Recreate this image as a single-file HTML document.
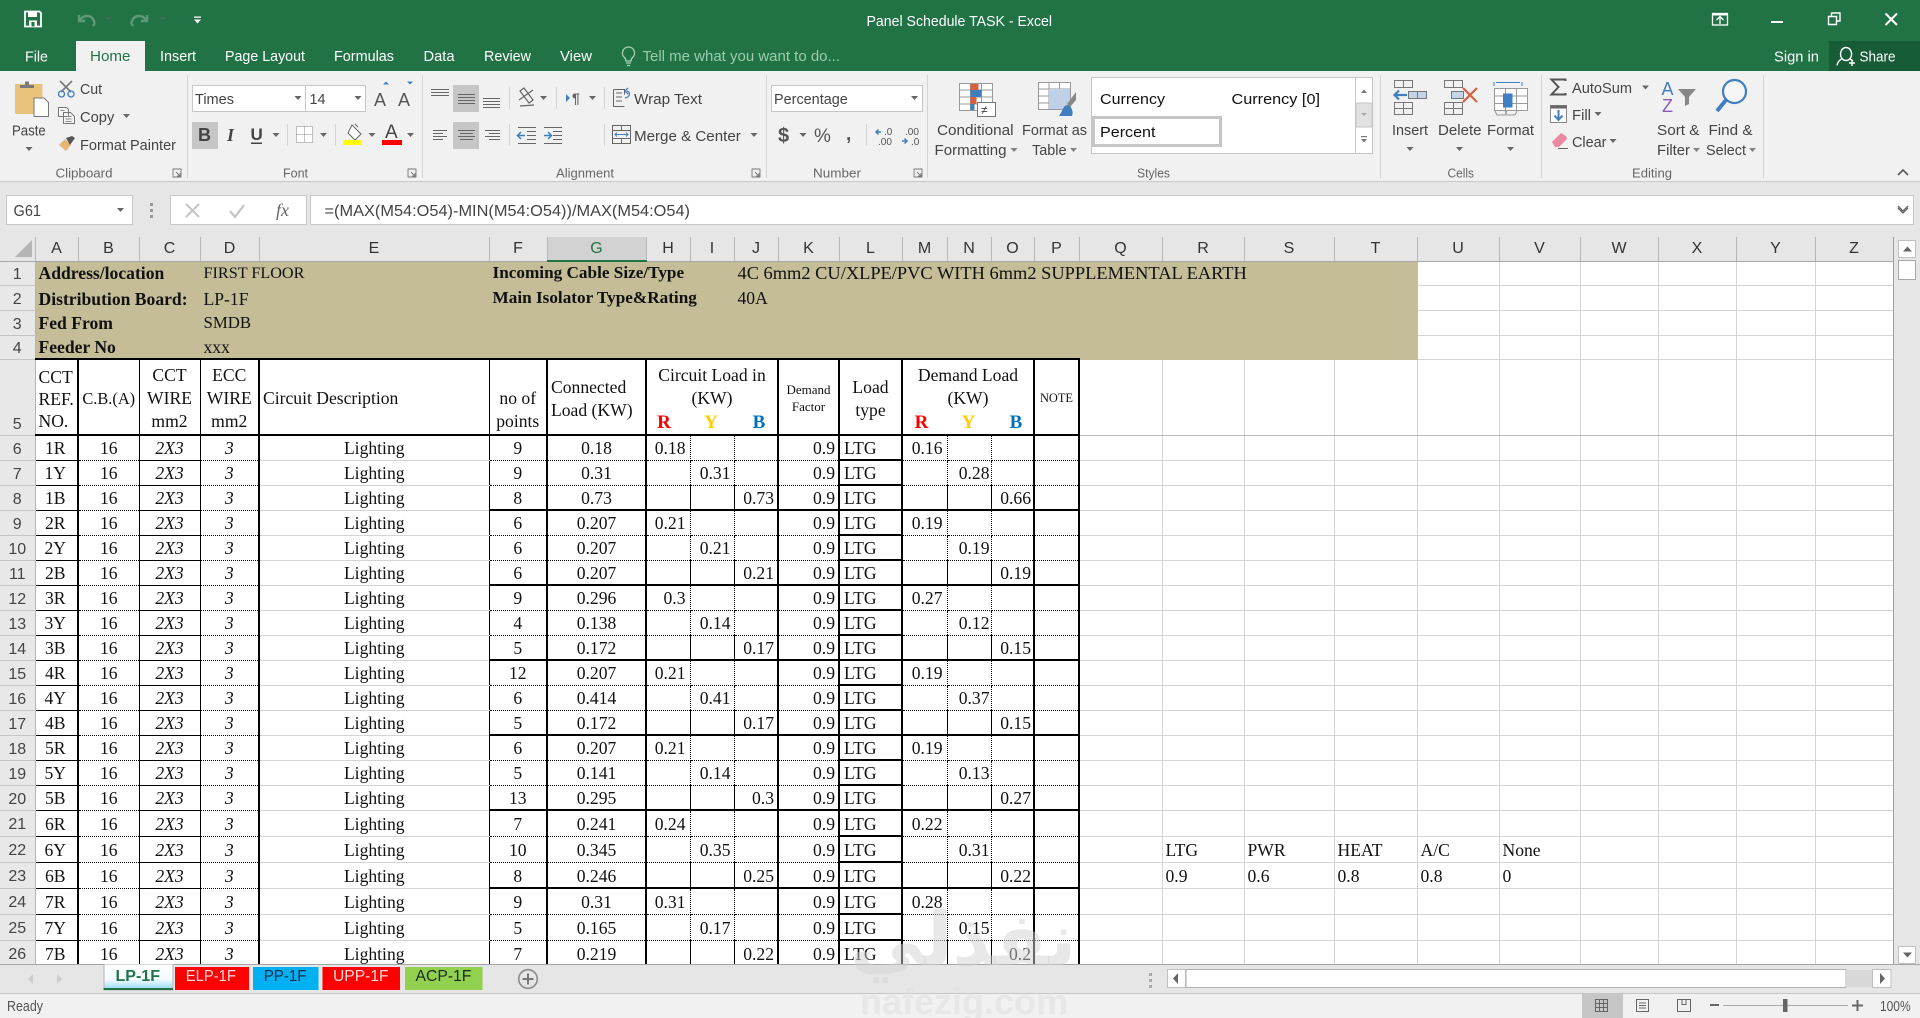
<!DOCTYPE html>
<html><head><meta charset="utf-8"><title>Panel Schedule TASK - Excel</title>
<style>
html,body{margin:0;padding:0;width:1920px;height:1018px;overflow:hidden;background:#f1f1f1}
svg.base{position:absolute;left:0;top:0}
svg text{font-family:"Liberation Sans",sans-serif;font-size:15px;fill:#444}
.w text{fill:#fff}
.g text{font-size:13px;fill:#666}
#sheet{position:absolute;left:0;top:237px;width:1893px;height:727px;overflow:hidden;background:#fff}
table{border-collapse:collapse;table-layout:fixed;width:1893px;font-family:"Liberation Serif","Times New Roman",serif;font-size:17.6px;color:#111}
tr{height:25px}
tr.b26{height:26px}
td{padding:0 3px;border-right:1px solid #d4d4d4;border-bottom:1px solid #d4d4d4;white-space:nowrap;line-height:20px;overflow:visible}
th{padding:4px 0 0;background:#e8e8e8;font:400 16px "Liberation Sans",sans-serif;line-height:18px;color:#444;border-right:1px solid #b4b4b4;border-bottom:1px solid #c4c4c4;text-align:center}
tr.h th{padding:0;background:#e6e6e6;border-right:1px solid #b8b8b8;border-bottom:1px solid #a8a8a8;color:#333}
tr.h th.s{background:#d2d2d2;color:#217346;border-bottom:2px solid #217346}
tr.t td:nth-child(-n+21){background:#c4bd97;border-color:#c4bd97}
tr.t td:nth-child(2),tr.t td:nth-child(7){font-weight:700}
tr.t td:nth-child(7){font-size:17.2px}
tr.r4 td:nth-child(-n+17){border-bottom:2px solid #000}
tr.r5 td:nth-child(-n+13){border-bottom:2px solid #000;white-space:nowrap}
tr.r5 td:nth-child(n+14){border-bottom:1px solid #b8b8b8}
tr.r5 td{line-height:23px}
tr.r5 td.c{text-align:center}
tr.r5 td.p{padding:0}
tr.d td{padding-top:1px}
tr.b26 td{padding-top:2px}
tr.d td:nth-child(-n+17){text-align:center;border-bottom:1px dotted #000}
tr.d td:nth-child(2){border-bottom:1px solid #000;border-right:2px solid #000;padding-right:5px;padding-left:3px}
tr.d td:nth-child(3){border-right:1px solid #000}
tr.d td:nth-child(4){border-right:1px solid #000;border-bottom:1px solid #000;font-style:italic}
tr.d td:nth-child(5){border-right:2px solid #000;font-style:italic}
tr.d td:nth-child(6){border-right:1px solid #000;border-bottom:1px solid #d4d4d4}
tr.d td:nth-child(7){border-right:2px solid #000}
tr.d td:nth-child(8){border-right:2px solid #000}
tr.d td:nth-child(9),tr.d td:nth-child(10),tr.d td:nth-child(14){border-right:1px dotted #000;text-align:right;padding-right:3px}
tr.d td:nth-child(15){border-right:1px dotted #000;text-align:right;padding-right:1px}
tr.d td:nth-child(9){padding-right:4px}
tr.d td:nth-child(14){padding-right:4px}
tr.d td:nth-child(11),tr.d td:nth-child(12){border-right:2px solid #000;text-align:right;padding-right:3px}
tr.d td:nth-child(16){border-right:2px solid #000;text-align:right;padding-right:2px}
tr.d td:nth-child(13){border-right:2px solid #000;border-bottom:2px solid #000;text-align:left;padding-left:4px}
tr.d td:nth-child(17){border-right:2px solid #000}
tr.e td:nth-child(n+7):nth-child(-n+17){border-bottom:2px solid #000}
tr.e td:nth-child(9),tr.e td:nth-child(10),tr.e td:nth-child(14),tr.e td:nth-child(15){border-right:1px solid #000}
.bc{position:absolute;font:700 19px "Liberation Serif",serif;line-height:22px;transform:translateX(-50%)}
#wm{position:absolute;left:0;top:0;width:1920px;height:1018px;pointer-events:none;overflow:hidden}
#wm div{position:absolute;white-space:nowrap}
</style></head><body>
<svg class="base" width="1920" height="1018" viewBox="0 0 1920 1018">
<defs><path id="a" d="M0 0h7l-3.500 4z" fill="#666"/><path id="dl" d="M0 0h8v8h-8zM3 3l4 4M7 4v3h-3" fill="none" stroke="#777" stroke-width=".9"/></defs>
<rect width="1920" height="71" fill="#217346"/>
<rect x="1829" y="41" width="91" height="30" fill="#185c37"/>
<rect x="76" y="41" width="69" height="30" fill="#f1f1f1"/>
<rect y="71" width="1920" height="110" fill="#f1f1f1"/>
<rect y="181" width="1920" height="1" fill="#c8c8c8"/>
<rect y="182" width="1920" height="55" fill="#e6e6e6"/>

<!-- title bar icons -->
<path d="M25 11.500h14.500l1.500 1.500v13.500h-16z" fill="none" stroke="#fff" stroke-width="1.800"/><rect x="28" y="12" width="9" height="5" fill="#fff"/><rect x="29" y="20.500" width="8" height="6" fill="#fff"/><rect x="31.500" y="22" width="3" height="4.500" fill="#217346"/>
<path d="M79 15v6h6M80 20c4-6 12-5 14 1 1 2 0 4-1 5" fill="none" stroke="#5d9a78" stroke-width="2.400"/>
<use href="#a" x="105" y="17" opacity=".4"/>
<path d="M147 15v6h-6M146 20c-4-6-12-5-14 1-1 2 0 4 1 5" fill="none" stroke="#5d9a78" stroke-width="2.400"/>
<use href="#a" x="159.500" y="17" opacity=".4"/>
<rect x="194" y="16.500" width="7" height="1.300" fill="#fff"/><path d="M194 19.500h7l-3.500 4z" fill="#fff"/>
<g class="w"><text x="866.500" y="26" textLength="185.500" lengthAdjust="spacingAndGlyphs">Panel Schedule TASK - Excel</text>
<text x="25" y="61.500" textLength="23" lengthAdjust="spacingAndGlyphs">File</text>
<text x="160" y="61" textLength="36" lengthAdjust="spacingAndGlyphs">Insert</text>
<text x="225" y="61" textLength="80" lengthAdjust="spacingAndGlyphs">Page Layout</text>
<text x="334" y="61" textLength="60" lengthAdjust="spacingAndGlyphs">Formulas</text>
<text x="423.500" y="61" textLength="31" lengthAdjust="spacingAndGlyphs">Data</text>
<text x="484" y="61" textLength="47" lengthAdjust="spacingAndGlyphs">Review</text>
<text x="560" y="61" textLength="32" lengthAdjust="spacingAndGlyphs">View</text>
<text x="1774" y="61.500" textLength="45" lengthAdjust="spacingAndGlyphs">Sign in</text>
<text x="1859.500" y="61.500" textLength="36" lengthAdjust="spacingAndGlyphs">Share</text></g>
<text x="90" y="61" textLength="40.500" lengthAdjust="spacingAndGlyphs" style="fill:#217346">Home</text>
<text x="642.500" y="61" textLength="197.500" lengthAdjust="spacingAndGlyphs" style="fill:#9ccbb0">Tell me what you want to do...</text>
<path d="M628.500 47a6 6 0 0 0-4 10.500c1 1 1.500 2 1.500 3.500h5c0-1.500.5-2.500 1.500-3.500a6 6 0 0 0-4-10.500zM626 63h5M627 65.500h3" fill="none" stroke="#a7d3b9" stroke-width="1.300"/>
<!-- window buttons -->
<rect x="1712.500" y="13.500" width="15" height="11.500" fill="none" stroke="#fff" stroke-width="1.300"/><rect x="1712.500" y="13.500" width="15" height="2" fill="#fff"/><path d="M1720 24v-7M1716.500 20l3.500-3.500 3.500 3.500" fill="none" stroke="#fff" stroke-width="1.300"/>
<rect x="1771" y="21" width="12" height="2" fill="#fff"/>
<path d="M1828.500 16.500h8v8h-8zM1831.500 16v-3h8.500v8h-3.500" fill="none" stroke="#fff" stroke-width="1.400"/>
<path d="M1885.500 13.500l11.500 11.500M1897 13.500l-11.500 11.500" stroke="#fff" stroke-width="2" fill="none"/>
<path d="M1846 47.500a5.500 6.500 0 1 0 .1 0zM1842.500 58.500c-3 1-5 4-5.500 7M1850 59c1 .5 2 1 3 2M1852 60v6M1849 63h6" fill="none" stroke="#fff" stroke-width="1.400"/>

<!-- group separators -->
<g fill="#d4d4d4"><rect x="187" y="75" width="1" height="103"/><rect x="422" y="75" width="1" height="103"/><rect x="766" y="75" width="1" height="103"/><rect x="927" y="75" width="1" height="103"/><rect x="1380" y="75" width="1" height="103"/><rect x="1541" y="75" width="1" height="103"/><rect x="1763" y="75" width="1" height="103"/>
<rect x="287" y="124" width="1" height="22"/><rect x="335" y="124" width="1" height="22"/><rect x="509" y="87" width="1" height="22"/><rect x="509" y="124" width="1" height="22"/><rect x="556" y="87" width="1" height="22"/><rect x="604" y="87" width="1" height="22"/><rect x="604" y="124" width="1" height="22"/><rect x="866" y="124" width="1" height="22"/></g>

<!-- clipboard -->
<rect x="15" y="84" width="27.500" height="30" rx="1" fill="#e9c27c"/><path d="M20 88v-3h5v-3.500h4v3.500h5v3z" fill="#7a7a7a"/>
<path d="M34 98h10l4.500 4.500v14h-14.500z" fill="#fff" stroke="#777"/>
<text x="12" y="135.500" textLength="33.700" lengthAdjust="spacingAndGlyphs">Paste</text><use href="#a" x="25.500" y="147"/>
<path d="M60 81l11 11M72 81l-11 11" stroke="#777" stroke-width="1.600" fill="none"/><circle cx="61.500" cy="94" r="3" fill="none" stroke="#3f7fbf" stroke-width="1.300"/><circle cx="71" cy="94" r="3" fill="none" stroke="#3f7fbf" stroke-width="1.300"/>
<text x="80" y="94" textLength="22" lengthAdjust="spacingAndGlyphs">Cut</text>
<path d="M58.500 107.500h8l2 2v7h-10zM63.500 112.500h7l4 4v7h-11z" fill="#f5f5f5" stroke="#777"/><path d="M65.500 116.500h6M65.500 119h6M65.500 121.500h6M60.500 110.500h4" stroke="#888"/>
<text x="80" y="122" textLength="34.300" lengthAdjust="spacingAndGlyphs">Copy</text><use href="#a" x="123" y="114"/>
<path d="M59 145l6-6 6 6-5 6z" fill="#e3b674"/><path d="M66 138l6-2 3 2-5 7z" fill="#555"/>
<text x="80" y="150" textLength="96" lengthAdjust="spacingAndGlyphs">Format Painter</text>
<!-- font -->
<rect x="192.500" y="85.500" width="113" height="26" fill="#fff" stroke="#c6c6c6"/><rect x="305.500" y="85.500" width="60" height="26" fill="#fff" stroke="#c6c6c6"/>
<text x="195" y="104" textLength="39" lengthAdjust="spacingAndGlyphs">Times</text><text x="309.500" y="104" textLength="16" lengthAdjust="spacingAndGlyphs">14</text>
<use href="#a" x="294.500" y="96"/><use href="#a" x="354.500" y="96"/>
<text x="374" y="106" style="font-size:18px;fill:#555">A</text><path d="M383 84.500h6l-3-3z" fill="#3f7fbf"/>
<text x="398" y="106" style="font-size:18px;fill:#555">A</text><path d="M407 81.500h6l-3 3z" fill="#3f7fbf"/>
<rect x="192" y="122" width="26" height="27" fill="#c6c6c6"/>
<text x="198" y="141" style="font-size:18px;font-weight:700;fill:#444">B</text>
<text x="227" y="141" style="font-size:18px;font-style:italic;font-family:'Liberation Serif';fill:#444;font-weight:700">I</text>
<text x="250.500" y="140" style="font-size:17px;font-weight:700;fill:#444">U</text><rect x="251" y="142.500" width="11" height="1.500" fill="#444"/>
<use href="#a" x="272.500" y="133"/>
<path d="M296.500 126.500h16v16h-16zM304.500 126.500v16M296.500 134.500h16" fill="#fff" stroke="#888" stroke-dasharray="1 1"/>
<use href="#a" x="320" y="133"/>
<path d="M352 125l9 9-6 6-7-7z" fill="#fff" stroke="#666"/><path d="M355 124l3 3" stroke="#666"/><rect x="343" y="140" width="19" height="5" fill="#ff0"/>
<use href="#a" x="368.500" y="133"/>
<text x="385" y="138" style="font-size:19px;fill:#444">A</text><rect x="382" y="140" width="20" height="5" fill="#f00"/>
<use href="#a" x="407" y="133"/>
<text x="283" y="177.500" textLength="25" lengthAdjust="spacingAndGlyphs" style="font-size:13px;fill:#666">Font</text>
<text x="55.500" y="177.500" textLength="57" lengthAdjust="spacingAndGlyphs" style="font-size:13px;fill:#666">Clipboard</text>
<use href="#dl" x="173" y="169"/><use href="#dl" x="408" y="169"/>
<!-- alignment -->
<rect x="453" y="85" width="26" height="27" fill="#c6c6c6"/><rect x="453" y="122" width="26" height="27" fill="#c6c6c6"/>
<path d="M431 89.500h18M431 92.500h18M431 95.500h18M458 94.500h17M458 97.500h17M458 100.500h17M458 103.500h17M483 98.500h17M483 101.500h17M483 104.500h17M483 107.500h17" stroke="#666" fill="none"/>
<path d="M433 130.500h14M433 133.500h10M433 136.500h14M433 139.500h10M458 130.500h17M460 133.500h13M458 136.500h17M460 139.500h13M485 130.500h15M489 133.500h11M485 136.500h15M489 139.500h11" stroke="#666" fill="none"/>
<path d="M519 100l14-10M524 88l9 12-4 3-9-12zM520 106l14-1" fill="none" stroke="#666" stroke-width="1.200"/><use href="#a" x="540" y="96"/>
<path d="M566 94l4 4-4 4z" fill="#3f7fbf"/><text x="572" y="103" style="font-size:14px;font-weight:700;fill:#666">¶</text><use href="#a" x="589" y="96"/>
<path d="M518 127.500h18M518 143.500h18M527 131.500h9M527 135.500h9M527 139.500h9M544 127.500h18M544 143.500h18M553 131.500h9M553 135.500h9M553 139.500h9" stroke="#666" fill="none"/>
<path d="M518 135.500h7M521 132l-3.500 3.500 3.500 3.500M544 135.500h7M548 132l3.500 3.500-3.500 3.500" stroke="#3f7fbf" stroke-width="1.500" fill="none"/>
<path d="M613.500 89.500h11v5M613.500 89.500v17h11M616 93h6M616 97h6M616 101h6" fill="none" stroke="#666"/><path d="M625 98c5-1 6-6 2-7M628 88l-3 3 3 3" fill="none" stroke="#3f7fbf" stroke-width="1.300"/>
<text x="634" y="104" textLength="68" lengthAdjust="spacingAndGlyphs">Wrap Text</text>
<path d="M612.500 125.500h18v18h-18zM612.500 130.500h18M612.500 138.500h18M621.500 125.500v5M621.500 138.500v5" fill="none" stroke="#666"/><path d="M615 134.500h13M617 132.500l-2 2 2 2M626 132.500l2 2-2 2" fill="none" stroke="#3f7fbf"/>
<text x="634" y="141" textLength="106.800" lengthAdjust="spacingAndGlyphs">Merge &amp; Center</text><use href="#a" x="750.500" y="133"/>
<text x="556" y="177.500" textLength="58" lengthAdjust="spacingAndGlyphs" style="font-size:13px;fill:#666">Alignment</text><use href="#dl" x="752" y="169"/>
<!-- number -->
<rect x="771.500" y="85.500" width="151" height="26" fill="#fff" stroke="#c6c6c6"/>
<text x="774" y="104" textLength="73.800" lengthAdjust="spacingAndGlyphs">Percentage</text><use href="#a" x="911" y="96"/>
<text x="778" y="142" style="font-size:20px;font-weight:700;fill:#555">$</text><use href="#a" x="799.500" y="133"/>
<text x="814" y="142" style="font-size:19px;fill:#555">%</text><text x="846" y="140" style="font-size:19px;font-weight:700;fill:#555">,</text>
<text x="884" y="135" style="font-size:10px;fill:#555">.0</text><text x="878" y="145" style="font-size:10px;fill:#555">.00</text><path d="M881 132h-5M878.500 129.500l-2.500 2.500 2.500 2.500" stroke="#3f7fbf" stroke-width="1.500" fill="none"/>
<text x="905" y="135" style="font-size:10px;fill:#555">.00</text><text x="911" y="145" style="font-size:10px;fill:#555">.0</text><path d="M902 141h5M904.500 138.500l2.500 2.500-2.500 2.500" stroke="#3f7fbf" stroke-width="1.500" fill="none"/>
<text x="813" y="177.500" textLength="48" lengthAdjust="spacingAndGlyphs" style="font-size:13px;fill:#666">Number</text><use href="#dl" x="914" y="169"/>
<!-- conditional / table -->
<path d="M959.500 83.500h33v27h-33zM959.500 90h33M959.500 97h33M959.500 104h33M970.500 83.500v27M981.500 83.500v27" fill="#fff" stroke="#999"/>
<rect x="970.500" y="84" width="8" height="6" fill="#d8603f"/><rect x="970.500" y="90" width="11" height="7" fill="#3f7fbf"/><rect x="970.500" y="97" width="6" height="7" fill="#d8603f"/><rect x="970.500" y="104" width="4" height="6" fill="#3f7fbf"/>
<rect x="977.500" y="102.500" width="18" height="14" fill="#fff" stroke="#777"/><text x="981" y="114" style="font-size:12px;fill:#444">≠</text>
<text x="937" y="135" textLength="76.500" lengthAdjust="spacingAndGlyphs">Conditional</text><text x="934.500" y="155" textLength="72" lengthAdjust="spacingAndGlyphs">Formatting</text><use href="#a" x="1010.500" y="148" opacity=".8"/>
<path d="M1038.500 82.500h32v27h-32zM1038.500 89h32M1038.500 96h32M1038.500 103h32M1049 82.500v27M1059.500 82.500v27" fill="#fff" stroke="#999"/><rect x="1049" y="89" width="21" height="20" fill="#c0d0e8"/>
<path d="M1076 92l-9 12 3 3 6-7z" fill="#888"/><path d="M1067 105c-4 1-4 5-8 11h13c2-5-1-10-5-11z" fill="#3f7fbf"/>
<text x="1022" y="135" textLength="65" lengthAdjust="spacingAndGlyphs">Format as</text><text x="1032" y="155" textLength="34.500" lengthAdjust="spacingAndGlyphs">Table</text><use href="#a" x="1070" y="148" opacity=".8"/>
<!-- styles gallery -->
<rect x="1091.500" y="77.500" width="281" height="76" fill="#fff" stroke="#c6c6c6"/>
<rect x="1093.500" y="117.500" width="127" height="28" fill="#fff" stroke="#c6c6c6" stroke-width="3"/>
<g style="fill:#111"><text x="1100" y="104" textLength="65" lengthAdjust="spacingAndGlyphs" style="fill:#111">Currency</text><text x="1231.500" y="104" textLength="88.500" lengthAdjust="spacingAndGlyphs" style="fill:#111">Currency [0]</text><text x="1100" y="137" textLength="55.500" lengthAdjust="spacingAndGlyphs" style="fill:#111">Percent</text></g>
<rect x="1355.500" y="77.500" width="17" height="76" fill="#fff" stroke="#c6c6c6"/><rect x="1356" y="103" width="16" height="24" fill="#e2e2e2" stroke="#c6c6c6"/>
<path d="M1361 93l3-3.500 3 3.500z" fill="#777"/><path d="M1361 113h6l-3 3z" fill="#aaa"/><rect x="1361" y="136" width="6" height="1.200" fill="#777"/><path d="M1361 139h6l-3 3.500z" fill="#777"/>
<text x="1137" y="177.500" textLength="33" lengthAdjust="spacingAndGlyphs" style="font-size:13px;fill:#666">Styles</text>
<!-- cells -->
<path d="M1394.500 80.500h18v7h-18zM1403.500 80.500v7M1394.500 102.500h18v12h-18zM1403.500 102.500v12M1394.500 108.500h18" fill="none" stroke="#777"/><rect x="1408.500" y="91.500" width="18" height="7" fill="#c5d4e6" stroke="#777"/><path d="M1417.500 91.500v7" stroke="#777"/><path d="M1407 95h-12M1399 90.500l-4.500 4.500 4.500 4.500" stroke="#3f7fbf" stroke-width="2.200" fill="none"/>
<text x="1392" y="135" textLength="36" lengthAdjust="spacingAndGlyphs">Insert</text><use href="#a" x="1406.500" y="147"/>
<path d="M1444.500 80.500h18v7h-18zM1453.500 80.500v7M1444.500 102.500h18v12h-18zM1453.500 102.500v12M1444.500 108.500h18" fill="none" stroke="#777"/><rect x="1451.500" y="91.500" width="12" height="7" fill="#c5d4e6" stroke="#777"/>
<path d="M1463 88l14 14M1477 88l-14 14" stroke="#d8603f" stroke-width="2.200" fill="none"/>
<text x="1438" y="135" textLength="43.500" lengthAdjust="spacingAndGlyphs">Delete</text><use href="#a" x="1456" y="147"/>
<path d="M1494 82v4M1522 82v4M1496 82.500h24" stroke="#3f7fbf" fill="none"/><path d="M1494.500 88.500h33v22h-33zM1505.500 88.500v22M1516.500 88.500v22M1494.500 96h33M1494.500 103.500h33" fill="#fff" stroke="#999"/><rect x="1503" y="93.500" width="9.500" height="14" fill="#3f7fbf"/>
<path d="M1495 111l2 4h8l2-4M1505 111l2 4h8l2-4" fill="none" stroke="#999"/>
<text x="1487" y="135" textLength="47" lengthAdjust="spacingAndGlyphs">Format</text><use href="#a" x="1507" y="147"/>
<text x="1447.500" y="177.500" textLength="26.500" lengthAdjust="spacingAndGlyphs" style="font-size:13px;fill:#666">Cells</text>
<!-- editing -->
<path d="M1565.500 81v-1.500h-14l7 7.500-7 7.500h14v-1.500" fill="none" stroke="#555" stroke-width="2"/>
<text x="1572" y="93" textLength="60" lengthAdjust="spacingAndGlyphs">AutoSum</text><use href="#a" x="1642" y="85.500"/>
<rect x="1550.500" y="105.500" width="16" height="17" fill="#fff" stroke="#888"/><rect x="1550.500" y="105.500" width="16" height="3" fill="#666"/><path d="M1558.500 110v10M1554.500 115.500l4 4.500 4-4.500" stroke="#3f7fbf" stroke-width="2" fill="none"/>
<text x="1572" y="120" textLength="19" lengthAdjust="spacingAndGlyphs">Fill</text><use href="#a" x="1594.500" y="112"/>
<path d="M1552 142l9-9 5 3 1 3-8 8h-4z" fill="#ea8aa0"/><path d="M1558 148.500h10" stroke="#666"/>
<text x="1572" y="147" textLength="34.500" lengthAdjust="spacingAndGlyphs">Clear</text><use href="#a" x="1609.500" y="139"/>
<text x="1661.500" y="95" style="font-size:18px;fill:#3f7fbf">A</text><text x="1662" y="112" style="font-size:18px;fill:#8a5bb5">Z</text>
<path d="M1678 89h18l-7 8v7l-4 2v-9z" fill="#888"/>
<text x="1657" y="135" textLength="42.500" lengthAdjust="spacingAndGlyphs">Sort &amp;</text><text x="1657" y="155" textLength="33" lengthAdjust="spacingAndGlyphs">Filter</text><use href="#a" x="1693" y="148" opacity=".8"/>
<circle cx="1734.500" cy="91.500" r="11.500" fill="#fff" fill-opacity=".4" stroke="#3f7fbf" stroke-width="2.200"/><path d="M1726 100l-9 11" stroke="#3f7fbf" stroke-width="4"/>
<text x="1708.500" y="135" textLength="44" lengthAdjust="spacingAndGlyphs">Find &amp;</text><text x="1706" y="155" textLength="40" lengthAdjust="spacingAndGlyphs">Select</text><use href="#a" x="1749" y="148" opacity=".8"/>
<text x="1632" y="177.500" textLength="40" lengthAdjust="spacingAndGlyphs" style="font-size:13px;fill:#666">Editing</text>
<path d="M1898 175l5-5 5 5" fill="none" stroke="#555" stroke-width="1.600"/>

<!-- formula bar -->
<rect x="6.500" y="195.500" width="126" height="29" fill="#fff" stroke="#c8c8c8"/>
<text x="13.500" y="216" textLength="27.500" lengthAdjust="spacingAndGlyphs" style="font-size:16px">G61</text><use href="#a" x="117" y="208"/>
<g fill="#999"><rect x="150" y="203" width="3" height="3"/><rect x="150" y="209" width="3" height="3"/><rect x="150" y="215" width="3" height="3"/></g>
<rect x="170.500" y="195.500" width="136" height="29" fill="#fff" stroke="#c8c8c8"/>
<path d="M186 204l13 13M199 204l-13 13" stroke="#c4c4c4" stroke-width="2" fill="none"/><path d="M230 211l5 6 9-12" stroke="#c4c4c4" stroke-width="2.200" fill="none"/>
<text x="276" y="216" style="font-family:'Liberation Serif';font-style:italic;font-size:18px;fill:#666">fx</text>
<rect x="310.500" y="195.500" width="1603" height="29" fill="#fff" stroke="#c8c8c8"/>
<text x="324.500" y="216" textLength="365.500" lengthAdjust="spacingAndGlyphs" style="font-size:15.500px">=(MAX(M54:O54)-MIN(M54:O54))/MAX(M54:O54)</text>
<path d="M1898 206l5 5 5-5M1898 208l5 5 5-5" fill="none" stroke="#666" stroke-width="1.300"/>

<!-- vertical scrollbar -->
<rect x="1893" y="237" width="27" height="727" fill="#e6e6e6"/><rect x="1893" y="237" width="1" height="727" fill="#a0a0a0"/>
<rect x="1898.500" y="240.500" width="17" height="17" fill="#fff" stroke="#c0c0c0"/><path d="M1903 251.500h9l-4.500-5z" fill="#666"/>
<rect x="1898.500" y="260.500" width="17" height="19" fill="#fff" stroke="#a8a8a8"/>
<rect x="1898.500" y="946.500" width="17" height="17" fill="#fff" stroke="#c0c0c0"/><path d="M1903 952.500h9l-4.500 5z" fill="#666"/>

<!-- tabs bar -->
<rect y="964" width="1920" height="30" fill="#e6e6e6"/><rect y="964" width="1920" height="1" fill="#a4a4a4"/><rect y="993" width="1920" height="1" fill="#c6c6c6"/>
<path d="M33 974l-5 5 5 5z" fill="#ccc"/><path d="M57 974l5 5-5 5z" fill="#ccc"/>
<defs><linearGradient id="lp" x1="0" y1="0" x2="0" y2="1"><stop offset="0" stop-color="#fff"/><stop offset=".6" stop-color="#f2fbff"/><stop offset="1" stop-color="#8fd8f5"/></linearGradient></defs>
<rect x="104" y="964" width="69" height="26" fill="url(#lp)" stroke="#b4b4b4"/><rect x="103.500" y="988" width="69.500" height="2" fill="#217346"/>
<rect x="175" y="967" width="74" height="23" fill="#f00"/><rect x="253" y="967" width="65.500" height="23" fill="#00b0f0"/><rect x="322.500" y="967" width="77.500" height="23" fill="#f00"/><rect x="405" y="967" width="77.500" height="23" fill="#92d050"/>
<text x="115.500" y="981" textLength="44.500" lengthAdjust="spacingAndGlyphs" style="font-size:16px;font-weight:700;fill:#217346">LP-1F</text>
<text x="185.700" y="981" textLength="50.300" lengthAdjust="spacingAndGlyphs" style="font-size:16px;fill:#ffd9d9">ELP-1F</text>
<text x="263.700" y="981" textLength="42.800" lengthAdjust="spacingAndGlyphs" style="font-size:16px;fill:#1c2a50">PP-1F</text>
<text x="333" y="981" textLength="55.600" lengthAdjust="spacingAndGlyphs" style="font-size:16px;fill:#ffd9d9">UPP-1F</text>
<text x="415.500" y="981" textLength="55.900" lengthAdjust="spacingAndGlyphs" style="font-size:16px;fill:#1a2a1a">ACP-1F</text>
<circle cx="528" cy="979" r="9.300" fill="none" stroke="#8a8a8a" stroke-width="1.600"/><path d="M522.500 979h11M528 973.500v11" stroke="#777" stroke-width="2"/>
<g fill="#a8a8a8"><rect x="1149" y="973" width="3" height="3"/><rect x="1149" y="979" width="3" height="3"/><rect x="1149" y="985" width="3" height="3"/></g>
<rect x="1167.500" y="969.500" width="18" height="18" fill="#fff" stroke="#c0c0c0"/><path d="M1178 973l-5 5.500 5 5.500z" fill="#666"/>
<rect x="1186" y="969.500" width="660" height="18" fill="#fff" stroke="#b0b0b0"/><rect x="1846" y="970" width="27" height="17" fill="#d8d8d8"/>
<rect x="1872.500" y="969.500" width="18.500" height="18" fill="#fff" stroke="#c0c0c0"/><path d="M1880 973l5 5.500-5 5.500z" fill="#666"/>

<!-- status bar -->
<rect y="994" width="1920" height="24" fill="#f1f1f1"/>
<text x="7" y="1011" textLength="36" lengthAdjust="spacingAndGlyphs" style="font-size:14.500px;fill:#555">Ready</text>
<rect x="1582" y="994" width="41" height="24" fill="#c6c6c6"/>
<path d="M1595.500 999.500h12v12h-12zM1599.500 999.500v12M1603.500 999.500v12M1595.500 1003.500h12M1595.500 1007.500h12" fill="none" stroke="#666"/>
<path d="M1636.500 999.500h12v12h-12zM1639 1003h7M1639 1005.500h7M1639 1008h7" fill="none" stroke="#666"/>
<path d="M1677.500 999.500h13v12h-13zM1682 999.500v5h4v-5" fill="none" stroke="#666"/>
<rect x="1710" y="1004" width="9" height="2" fill="#666"/><rect x="1723" y="1005" width="125" height="1" fill="#aaa"/><rect x="1783" y="999" width="4.500" height="13" fill="#666"/>
<path d="M1852 1005.500h11M1857.500 1000v11" stroke="#666" stroke-width="2"/>
<text x="1880" y="1011" textLength="30.600" lengthAdjust="spacingAndGlyphs" style="font-size:14.500px;fill:#555">100%</text>
</svg>

<div id="sheet">
<table><colgroup><col style="width:35px"><col style="width:43px"><col style="width:61px"><col style="width:61px"><col style="width:59px"><col style="width:230px"><col style="width:58px"><col style="width:99px"><col style="width:44px"><col style="width:44px"><col style="width:44px"><col style="width:61px"><col style="width:63px"><col style="width:45px"><col style="width:44px"><col style="width:43px"><col style="width:45px"><col style="width:83px"><col style="width:82px"><col style="width:90px"><col style="width:83px"><col style="width:82px"><col style="width:81px"><col style="width:78px"><col style="width:78px"><col style="width:79px"><col style="width:78px"></colgroup>
<tr class="h" style="height:24px"><th style="position:relative"><svg width="34" height="23" style="position:absolute;left:0;top:0"><path d="M32 3v17H15z" fill="#b5b5b5"/></svg></th><th>A</th><th>B</th><th>C</th><th>D</th><th>E</th><th>F</th><th class="s">G</th><th>H</th><th>I</th><th>J</th><th>K</th><th>L</th><th>M</th><th>N</th><th>O</th><th>P</th><th>Q</th><th>R</th><th>S</th><th>T</th><th>U</th><th>V</th><th>W</th><th>X</th><th>Y</th><th>Z</th></tr>
<tr class="t" style="height:24px"><th>1</th><td>Address/location</td><td></td><td></td><td style="font-size:16.200px">FIRST FLOOR</td><td></td><td>Incoming Cable Size/Type</td><td></td><td></td><td></td><td style="font-size:18.400px">4C 6mm2 CU/XLPE/PVC WITH 6mm2 SUPPLEMENTAL EARTH</td><td></td><td></td><td></td><td></td><td></td><td></td><td></td><td></td><td></td><td></td><td></td><td></td><td></td><td></td><td></td><td></td></tr>
<tr class="t"><th>2</th><td style="padding-top:2px">Distribution Board:</td><td></td><td></td><td style="padding-top:2px">LP-1F</td><td></td><td>Main Isolator Type&amp;Rating</td><td></td><td></td><td></td><td>40A</td><td></td><td></td><td></td><td></td><td></td><td></td><td></td><td></td><td></td><td></td><td></td><td></td><td></td><td></td><td></td><td></td></tr>
<tr class="t"><th>3</th><td>Fed From</td><td></td><td></td><td style="font-size:16.800px">SMDB</td><td></td><td></td><td></td><td></td><td></td><td></td><td></td><td></td><td></td><td></td><td></td><td></td><td></td><td></td><td></td><td></td><td></td><td></td><td></td><td></td><td></td><td></td></tr>
<tr class="t r4" style="height:24px"><th>4</th><td>Feeder No</td><td></td><td></td><td>xxx</td><td></td><td></td><td></td><td></td><td></td><td></td><td></td><td></td><td></td><td></td><td></td><td></td><td></td><td></td><td></td><td></td><td></td><td></td><td></td><td></td><td></td><td></td></tr>
<tr class="r5" style="height:76px"><th style="vertical-align:bottom;line-height:20px;padding:0">5</th>
<td style="line-height:22px;border-right:2px solid #000;padding-top:3px">CCT<br>REF.<br>NO.</td>
<td class="c p" style="border-right:1px solid #000;font-size:16.400px;padding-top:2px">C.B.(A)</td>
<td class="c p" style="border-right:1px solid #000;padding-top:2px">CCT<br>WIRE<br>mm2</td>
<td class="c p" style="border-right:2px solid #000;padding-top:2px">ECC<br>WIRE<br>mm2</td>
<td style="border-right:1px solid #000;padding-top:2px">Circuit Description</td>
<td class="c p" style="border-right:2px solid #000;vertical-align:bottom;padding-bottom:1px">no of<br>points</td>
<td style="border-right:2px solid #000;padding-top:4px">Connected<br>Load (KW)</td>
<td colspan="3" class="c p" style="border-right:2px solid #000;vertical-align:top;padding-top:4px">Circuit Load in<br>(KW)</td>
<td class="c p" style="border-right:2px solid #000;font-size:13px;line-height:17px;padding-top:2px">Demand<br>Factor</td>
<td class="c p" style="border-right:2px solid #000;padding-top:4px">Load<br>type</td>
<td colspan="3" class="c p" style="border-right:2px solid #000;vertical-align:top;padding-top:4px">Demand Load<br>(KW)</td>
<td class="c p" style="border-right:2px solid #000;font-size:12.400px;padding-top:2px">NOTE</td>
<td></td><td></td><td></td><td></td><td></td><td></td><td></td><td></td><td></td><td></td></tr>
<tr class="d"><th>6</th><td>1R</td><td>16</td><td>2X3</td><td>3</td><td>Lighting</td><td>9</td><td>0.18</td><td>0.18</td><td></td><td></td><td>0.9</td><td>LTG</td><td>0.16</td><td></td><td></td><td></td><td></td><td></td><td></td><td></td><td></td><td></td><td></td><td></td><td></td><td></td></tr>
<tr class="d"><th>7</th><td>1Y</td><td>16</td><td>2X3</td><td>3</td><td>Lighting</td><td>9</td><td>0.31</td><td></td><td>0.31</td><td></td><td>0.9</td><td>LTG</td><td></td><td>0.28</td><td></td><td></td><td></td><td></td><td></td><td></td><td></td><td></td><td></td><td></td><td></td><td></td></tr>
<tr class="d e"><th>8</th><td>1B</td><td>16</td><td>2X3</td><td>3</td><td>Lighting</td><td>8</td><td>0.73</td><td></td><td></td><td>0.73</td><td>0.9</td><td>LTG</td><td></td><td></td><td>0.66</td><td></td><td></td><td></td><td></td><td></td><td></td><td></td><td></td><td></td><td></td><td></td></tr>
<tr class="d"><th>9</th><td>2R</td><td>16</td><td>2X3</td><td>3</td><td>Lighting</td><td>6</td><td>0.207</td><td>0.21</td><td></td><td></td><td>0.9</td><td>LTG</td><td>0.19</td><td></td><td></td><td></td><td></td><td></td><td></td><td></td><td></td><td></td><td></td><td></td><td></td><td></td></tr>
<tr class="d"><th>10</th><td>2Y</td><td>16</td><td>2X3</td><td>3</td><td>Lighting</td><td>6</td><td>0.207</td><td></td><td>0.21</td><td></td><td>0.9</td><td>LTG</td><td></td><td>0.19</td><td></td><td></td><td></td><td></td><td></td><td></td><td></td><td></td><td></td><td></td><td></td><td></td></tr>
<tr class="d e"><th>11</th><td>2B</td><td>16</td><td>2X3</td><td>3</td><td>Lighting</td><td>6</td><td>0.207</td><td></td><td></td><td>0.21</td><td>0.9</td><td>LTG</td><td></td><td></td><td>0.19</td><td></td><td></td><td></td><td></td><td></td><td></td><td></td><td></td><td></td><td></td><td></td></tr>
<tr class="d"><th>12</th><td>3R</td><td>16</td><td>2X3</td><td>3</td><td>Lighting</td><td>9</td><td>0.296</td><td>0.3</td><td></td><td></td><td>0.9</td><td>LTG</td><td>0.27</td><td></td><td></td><td></td><td></td><td></td><td></td><td></td><td></td><td></td><td></td><td></td><td></td><td></td></tr>
<tr class="d"><th>13</th><td>3Y</td><td>16</td><td>2X3</td><td>3</td><td>Lighting</td><td>4</td><td>0.138</td><td></td><td>0.14</td><td></td><td>0.9</td><td>LTG</td><td></td><td>0.12</td><td></td><td></td><td></td><td></td><td></td><td></td><td></td><td></td><td></td><td></td><td></td><td></td></tr>
<tr class="d e"><th>14</th><td>3B</td><td>16</td><td>2X3</td><td>3</td><td>Lighting</td><td>5</td><td>0.172</td><td></td><td></td><td>0.17</td><td>0.9</td><td>LTG</td><td></td><td></td><td>0.15</td><td></td><td></td><td></td><td></td><td></td><td></td><td></td><td></td><td></td><td></td><td></td></tr>
<tr class="d"><th>15</th><td>4R</td><td>16</td><td>2X3</td><td>3</td><td>Lighting</td><td>12</td><td>0.207</td><td>0.21</td><td></td><td></td><td>0.9</td><td>LTG</td><td>0.19</td><td></td><td></td><td></td><td></td><td></td><td></td><td></td><td></td><td></td><td></td><td></td><td></td><td></td></tr>
<tr class="d"><th>16</th><td>4Y</td><td>16</td><td>2X3</td><td>3</td><td>Lighting</td><td>6</td><td>0.414</td><td></td><td>0.41</td><td></td><td>0.9</td><td>LTG</td><td></td><td>0.37</td><td></td><td></td><td></td><td></td><td></td><td></td><td></td><td></td><td></td><td></td><td></td><td></td></tr>
<tr class="d e"><th>17</th><td>4B</td><td>16</td><td>2X3</td><td>3</td><td>Lighting</td><td>5</td><td>0.172</td><td></td><td></td><td>0.17</td><td>0.9</td><td>LTG</td><td></td><td></td><td>0.15</td><td></td><td></td><td></td><td></td><td></td><td></td><td></td><td></td><td></td><td></td><td></td></tr>
<tr class="d"><th>18</th><td>5R</td><td>16</td><td>2X3</td><td>3</td><td>Lighting</td><td>6</td><td>0.207</td><td>0.21</td><td></td><td></td><td>0.9</td><td>LTG</td><td>0.19</td><td></td><td></td><td></td><td></td><td></td><td></td><td></td><td></td><td></td><td></td><td></td><td></td><td></td></tr>
<tr class="d"><th>19</th><td>5Y</td><td>16</td><td>2X3</td><td>3</td><td>Lighting</td><td>5</td><td>0.141</td><td></td><td>0.14</td><td></td><td>0.9</td><td>LTG</td><td></td><td>0.13</td><td></td><td></td><td></td><td></td><td></td><td></td><td></td><td></td><td></td><td></td><td></td><td></td></tr>
<tr class="d e"><th>20</th><td>5B</td><td>16</td><td>2X3</td><td>3</td><td>Lighting</td><td>13</td><td>0.295</td><td></td><td></td><td>0.3</td><td>0.9</td><td>LTG</td><td></td><td></td><td>0.27</td><td></td><td></td><td></td><td></td><td></td><td></td><td></td><td></td><td></td><td></td><td></td></tr>
<tr class="d b26"><th>21</th><td>6R</td><td>16</td><td>2X3</td><td>3</td><td>Lighting</td><td>7</td><td>0.241</td><td>0.24</td><td></td><td></td><td>0.9</td><td>LTG</td><td>0.22</td><td></td><td></td><td></td><td></td><td></td><td></td><td></td><td></td><td></td><td></td><td></td><td></td><td></td></tr>
<tr class="d b26"><th>22</th><td>6Y</td><td>16</td><td>2X3</td><td>3</td><td>Lighting</td><td>10</td><td>0.345</td><td></td><td>0.35</td><td></td><td>0.9</td><td>LTG</td><td></td><td>0.31</td><td></td><td></td><td></td><td>LTG</td><td>PWR</td><td>HEAT</td><td>A/C</td><td>None</td><td></td><td></td><td></td><td></td></tr>
<tr class="d e b26"><th>23</th><td>6B</td><td>16</td><td>2X3</td><td>3</td><td>Lighting</td><td>8</td><td>0.246</td><td></td><td></td><td>0.25</td><td>0.9</td><td>LTG</td><td></td><td></td><td>0.22</td><td></td><td></td><td>0.9</td><td>0.6</td><td>0.8</td><td>0.8</td><td>0</td><td></td><td></td><td></td><td></td></tr>
<tr class="d b26"><th>24</th><td>7R</td><td>16</td><td>2X3</td><td>3</td><td>Lighting</td><td>9</td><td>0.31</td><td>0.31</td><td></td><td></td><td>0.9</td><td>LTG</td><td>0.28</td><td></td><td></td><td></td><td></td><td></td><td></td><td></td><td></td><td></td><td></td><td></td><td></td><td></td></tr>
<tr class="d b26"><th>25</th><td>7Y</td><td>16</td><td>2X3</td><td>3</td><td>Lighting</td><td>5</td><td>0.165</td><td></td><td>0.17</td><td></td><td>0.9</td><td>LTG</td><td></td><td>0.15</td><td></td><td></td><td></td><td></td><td></td><td></td><td></td><td></td><td></td><td></td><td></td><td></td></tr>
<tr class="d e b26"><th>26</th><td>7B</td><td>16</td><td>2X3</td><td>3</td><td>Lighting</td><td>7</td><td>0.219</td><td></td><td></td><td>0.22</td><td>0.9</td><td>LTG</td><td></td><td></td><td>0.2</td><td></td><td></td><td></td><td></td><td></td><td></td><td></td><td></td><td></td><td></td><td></td></tr>
</table>
<div class="bc" style="left:664px;top:175px;color:#f00">R</div><div class="bc" style="left:711px;top:175px;color:#ffcc00">Y</div><div class="bc" style="left:759px;top:175px;color:#0070c0">B</div>
<div class="bc" style="left:921.500px;top:175px;color:#f00">R</div><div class="bc" style="left:968.500px;top:175px;color:#ffcc00">Y</div><div class="bc" style="left:1016px;top:175px;color:#0070c0">B</div>
</div>

<div id="wm">
<div style="left:850px;top:895px;font:700 74px 'DejaVu Sans',sans-serif;line-height:90px;color:rgba(210,210,210,.5)">نفذلي</div>
<div style="left:860px;top:982px;font:700 36px 'Liberation Sans',sans-serif;line-height:40px;color:rgba(222,222,222,.55)">nafezig.com</div>
</div>
</body></html>
